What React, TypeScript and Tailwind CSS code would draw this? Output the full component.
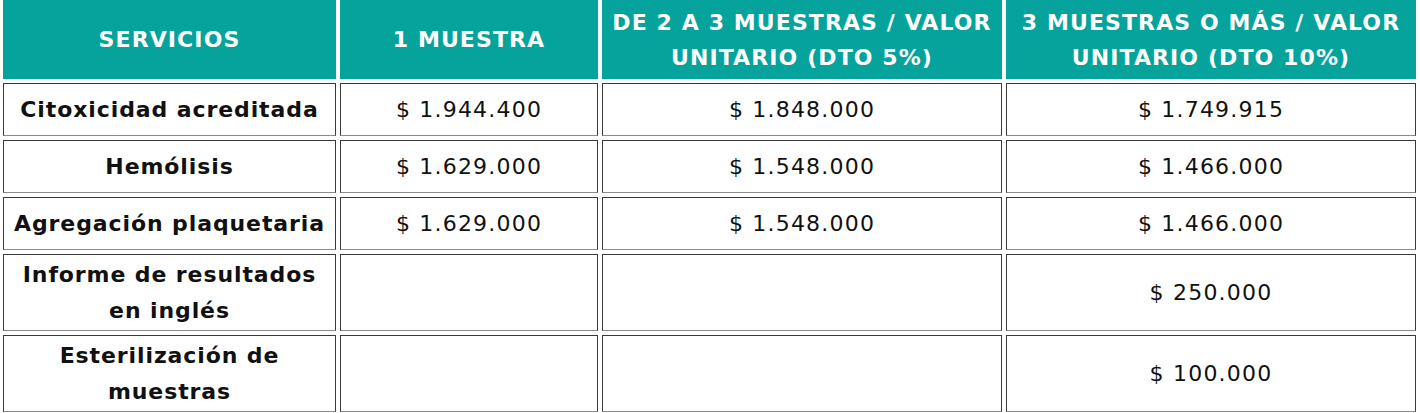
const rows = [
  { name: ['Citoxicidad acreditada'], values: ['$ 1.944.400', '$ 1.848.000', '$ 1.749.915'] },
  { name: ['Hemólisis'], values: ['$ 1.629.000', '$ 1.548.000', '$ 1.466.000'] },
  { name: ['Agregación plaquetaria'], values: ['$ 1.629.000', '$ 1.548.000', '$ 1.466.000'] },
  { name: ['Informe de resultados', 'en inglés'], values: ['', '', '$ 250.000'] },
  { name: ['Esterilización de', 'muestras'], values: ['', '', '$ 100.000'] },
]

const headers = [
  ['SERVICIOS'],
  ['1 MUESTRA'],
  ['DE 2 A 3 MUESTRAS / VALOR', 'UNITARIO (DTO 5%)'],
  ['3 MUESTRAS O MÁS / VALOR', 'UNITARIO (DTO 10%)'],
]

function Lines({ lines }: { lines: string[] }) {
  return (
    <>
      {lines.map((l, i) => (
        <span key={i} className="block whitespace-nowrap">
          {l}
        </span>
      ))}
    </>
  )
}

export default function App() {
  return (
    <div className="w-[1420px] h-[413px] bg-white px-[3px] font-['DejaVu_Sans',sans-serif] overflow-hidden">
      <div className="grid grid-cols-[333px_258px_400px_410px] grid-rows-[79px_53px_53px_53px_77px_77px] gap-x-[4px] gap-y-[4px]">
        {headers.map((h, i) => (
          <div
            key={i}
            className="bg-[#05a39b] text-white font-bold text-[22px] leading-[35px] flex flex-col items-center justify-center text-center tracking-[1.1px]"
          >
            <Lines lines={h} />
          </div>
        ))}
        {rows.map((r, ri) => (
          <div key={ri} className="contents">
            <div className="border border-[#3a3a3a] border-b-[#8c8c8c] flex flex-col items-center justify-center text-center font-bold text-[22px] leading-[36px] tracking-[0.9px] text-[#111]">
              <Lines lines={r.name} />
            </div>
            {r.values.map((v, vi) => (
              <div
                key={vi}
                className="border border-[#3a3a3a] border-b-[#8c8c8c] flex items-center justify-center text-[22px] tracking-[1.2px] text-[#111] whitespace-nowrap"
              >
                {v}
              </div>
            ))}
          </div>
        ))}
      </div>
    </div>
  )
}
